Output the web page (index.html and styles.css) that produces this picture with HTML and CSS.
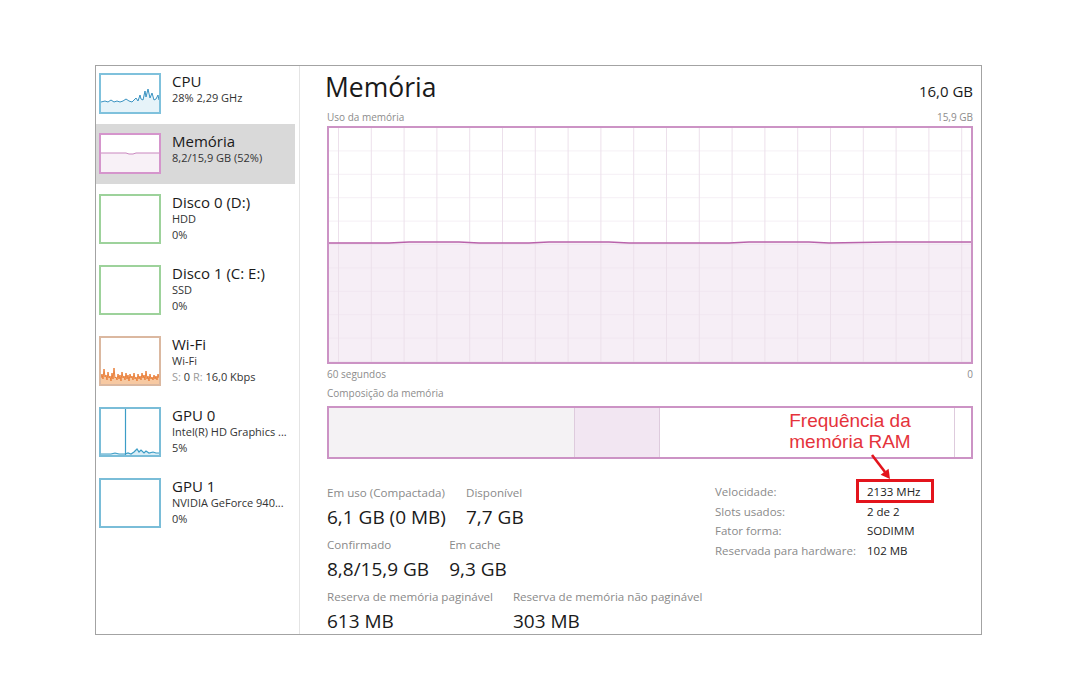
FILE: index.html
```html
<!DOCTYPE html>
<html lang="pt-BR">
<head>
<meta charset="utf-8">
<title>Memória</title>
<link rel="stylesheet" href="styles.css">
</head>
<body>
<div class="page">
  <div class="frame">
    <aside class="sidebar">
      <div class="item item-first">
        <div class="thumb thumb-cpu">
          <svg viewBox="0 0 58 37" preserveAspectRatio="none">
            <polygon class="fill-cpu" points="0,27 4,26 7,27 10,25 13,27 16,26 19,27 22,26 25,24 28,26 31,27 33,25 35,23 37,26 39,20 40,24 42,25 44,16 45,22 47,14 49,23 51,18 53,25 55,24 57,20 58,25 58,37 0,37"/>
            <polyline class="line-cpu" points="0,27 4,26 7,27 10,25 13,27 16,26 19,27 22,26 25,24 28,26 31,27 33,25 35,23 37,26 39,20 40,24 42,25 44,16 45,22 47,14 49,23 51,18 53,25 55,24 57,20 58,25"/>
          </svg>
        </div>
        <div class="info">
          <div class="name">CPU</div>
          <div class="sub">28% 2,29 GHz</div>
        </div>
      </div>
      <div class="item item-active">
        <div class="thumb thumb-mem">
          <svg viewBox="0 0 58 37" preserveAspectRatio="none">
            <polygon class="fill-mem" points="0,18 25,18 28,19 32,19 35,18 58,18 58,37 0,37"/>
            <polyline class="line-mem" points="0,18 25,18 28,19 32,19 35,18 58,18"/>
          </svg>
        </div>
        <div class="info">
          <div class="name">Memória</div>
          <div class="sub">8,2/15,9 GB (52%)</div>
        </div>
      </div>
      <div class="item item-tall">
        <div class="thumb thumb-tall thumb-disk"></div>
        <div class="info">
          <div class="name">Disco 0 (D:)</div>
          <div class="sub">HDD</div>
          <div class="sub">0%</div>
        </div>
      </div>
      <div class="item item-tall">
        <div class="thumb thumb-tall thumb-disk"></div>
        <div class="info">
          <div class="name">Disco 1 (C: E:)</div>
          <div class="sub">SSD</div>
          <div class="sub">0%</div>
        </div>
      </div>
      <div class="item item-tall">
        <div class="thumb thumb-tall thumb-wifi">
          <svg viewBox="0 0 58 46" preserveAspectRatio="none">
            <polygon class="fill-wifi" points="0,40 1,36 2,41 3,31 4,39 5,37 6,42 7,34 8,40 9,38 10,43 11,35 12,41 13,30 14,40 15,39 16,42 17,36 18,41 19,37 20,43 21,34 22,40 23,38 24,42 25,35 26,41 27,37 28,43 29,36 30,40 31,38 32,42 33,35 34,41 35,39 36,43 37,36 38,41 39,38 40,42 41,35 42,40 43,37 44,42 45,33 46,41 47,38 48,43 49,36 50,41 51,39 52,42 53,37 54,41 55,38 56,42 57,36 58,40 58,46 0,46"/>
            <polyline class="line-wifi" points="0,40 1,36 2,41 3,31 4,39 5,37 6,42 7,34 8,40 9,38 10,43 11,35 12,41 13,30 14,40 15,39 16,42 17,36 18,41 19,37 20,43 21,34 22,40 23,38 24,42 25,35 26,41 27,37 28,43 29,36 30,40 31,38 32,42 33,35 34,41 35,39 36,43 37,36 38,41 39,38 40,42 41,35 42,40 43,37 44,42 45,33 46,41 47,38 48,43 49,36 50,41 51,39 52,42 53,37 54,41 55,38 56,42 57,36 58,40"/>
          </svg>
        </div>
        <div class="info">
          <div class="name">Wi-Fi</div>
          <div class="sub">Wi-Fi</div>
          <div class="sub"><span class="dim">S:</span> 0 <span class="dim">R:</span> 16,0 Kbps</div>
        </div>
      </div>
      <div class="item item-tall">
        <div class="thumb thumb-tall thumb-gpu">
          <svg viewBox="0 0 58 46" preserveAspectRatio="none">
            <polygon class="fill-gpu" points="0,45 10,45 14,44 18,45 24,45 27,44 30,45 33,43 36,40 38,43 40,41 43,44 45,42 48,44 52,43 55,44 58,44 58,46 0,46"/>
            <polyline class="line-gpu" points="0,45 10,45 14,44 18,45 24,45 27,44 30,45 33,43 36,40 38,43 40,41 43,44 45,42 48,44 52,43 55,44 58,44"/>
            <line class="line-gpu" x1="24.5" y1="0" x2="24.5" y2="46"/>
          </svg>
        </div>
        <div class="info">
          <div class="name">GPU 0</div>
          <div class="sub">Intel(R) HD Graphics ...</div>
          <div class="sub">5%</div>
        </div>
      </div>
      <div class="item item-tall">
        <div class="thumb thumb-tall thumb-gpu"></div>
        <div class="info">
          <div class="name">GPU 1</div>
          <div class="sub">NVIDIA GeForce 940...</div>
          <div class="sub">0%</div>
        </div>
      </div>
    </aside>

    <main class="main">
      <div class="head">
        <h1 class="title">Memória</h1>
        <span class="total">16,0 GB</span>
      </div>
      <div class="axis axis-top"><span>Uso da memória</span><span>15,9 GB</span></div>
      <div class="graph">
        <svg viewBox="0 0 642 234" preserveAspectRatio="none">
          <defs>
            <pattern id="grid" x="9" y="0" width="32.8" height="23.4" patternUnits="userSpaceOnUse">
              <path d="M0.5 0 V23.4 M0 23.4 H32.8" class="grid-line"/>
            </pattern>
          </defs>
          <polygon class="graph-fill" points="0,115 60,115 80,114 130,114 150,115 200,115 220,114 280,114 300,115 400,115 420,114 480,114 500,115 560,114 642,114 642,234 0,234"/>
          <rect x="0" y="0" width="642" height="234" fill="url(#grid)"/>
          <polyline class="graph-line" points="0,115 60,115 80,114 130,114 150,115 200,115 220,114 280,114 300,115 400,115 420,114 480,114 500,115 560,114 642,114"/>
        </svg>
      </div>
      <div class="axis axis-below"><span>60 segundos</span><span>0</span></div>
      <div class="caption">Composição da memória</div>
      <div class="comp">
        <div class="seg seg-used"></div>
        <div class="seg seg-modified"></div>
        <div class="seg seg-standby"></div>
        <div class="seg seg-free"></div>
      </div>

      <div class="stats">
        <div class="stats-left">
          <div class="row">
            <div class="stat"><div class="label">Em uso (Compactada)</div><div class="value">6,1 GB (0 MB)</div></div>
            <div class="stat"><div class="label">Disponível</div><div class="value">7,7 GB</div></div>
          </div>
          <div class="row row-next">
            <div class="stat"><div class="label">Confirmado</div><div class="value">8,8/15,9 GB</div></div>
            <div class="stat"><div class="label">Em cache</div><div class="value">9,3 GB</div></div>
          </div>
          <div class="row row-next">
            <div class="stat"><div class="label">Reserva de memória paginável</div><div class="value">613 MB</div></div>
            <div class="stat"><div class="label">Reserva de memória não paginável</div><div class="value">303 MB</div></div>
          </div>
        </div>
        <div class="stats-right">
          <span class="k">Velocidade:</span><span class="v">2133 MHz</span>
          <span class="k">Slots usados:</span><span class="v">2 de 2</span>
          <span class="k">Fator forma:</span><span class="v">SODIMM</span>
          <span class="k">Reservada para hardware:</span><span class="v">102 MB</span>
        </div>
      </div>

      <div class="note">Frequência da<br>memória RAM</div>
      <svg class="arrow" viewBox="0 0 30 32" width="30" height="32">
        <line x1="7" y1="5" x2="20" y2="22" class="arrow-line"/>
        <polygon points="25,29 23.6,18.8 15.6,24.8" class="arrow-head"/>
      </svg>
      <div class="highlight"></div>
    </main>
  </div>
</div>
</body>
</html>
```

FILE: styles.css
```css
body {
  margin: 0;
  background: #ffffff;
  font-family: "Open Sans", "Noto Sans", sans-serif;
  color: #1b1b1b;
}

.page {
  padding: 65px 0 0 95px;
}

.frame {
  width: 887px;
  height: 570px;
  box-sizing: border-box;
  border: 1px solid #a3a3a3;
  display: flex;
  overflow: hidden;
}

/* ---------- sidebar ---------- */
.sidebar {
  width: 204px;
  flex: none;
  box-sizing: border-box;
  padding-right: 4px;
  border-right: 1px solid #e4e4e4;
}

.item {
  display: flex;
  align-items: flex-start;
  gap: 11px;
  padding: 9px 0 10px 3px;
}

.item-first {
  padding-top: 7px;
}

.item-tall {
  padding: 10px 0 11px 3px;
}

.item-active {
  background: #d9d9d9;
}

.thumb {
  width: 62px;
  height: 41px;
  flex: none;
  box-sizing: border-box;
  border: 2px solid #78bdd9;
  background: #ffffff;
}

.thumb svg {
  display: block;
  width: 100%;
  height: 100%;
}

.thumb-tall {
  height: 50px;
}

.thumb-cpu { border-color: #7fc1dc; }
.thumb-mem { border-color: #d595cc; }
.thumb-disk { border-color: #9dd29b; }
.thumb-wifi { border-color: #dbb8a0; }
.thumb-gpu { border-color: #7abdd8; }

.fill-cpu { fill: #e6f3f9; }
.line-cpu { fill: none; stroke: #3a93c2; stroke-width: 1; }
.fill-mem { fill: #f8f1f7; }
.line-mem { fill: none; stroke: #c987bf; stroke-width: 1; }
.fill-wifi { fill: #f7c9a2; }
.line-wifi { fill: none; stroke: #e8772e; stroke-width: 0.9; }
.fill-gpu { fill: #d9edf6; }
.line-gpu { fill: none; stroke: #3c9dc6; stroke-width: 1.2; }

.info {
  margin-top: -1px;
  white-space: nowrap;
}

.name {
  font-size: 15px;
  line-height: 18px;
  color: #1a1a1a;
}

.sub {
  font-size: 11px;
  line-height: 16px;
  color: #333333;
}

.dim {
  color: #9a9a9a;
}

/* ---------- main panel ---------- */
.main {
  flex: 1;
  min-width: 0;
  position: relative;
  padding: 5px 8px 0 27px;
}

.head {
  display: flex;
  justify-content: space-between;
  align-items: baseline;
  height: 32px;
}

.title {
  margin: 0;
  font-size: 26.5px;
  font-weight: 400;
  line-height: 32px;
  color: #1a1a1a;
  margin-left: -2px;
}

.total {
  font-size: 15px;
  color: #1a1a1a;
}

.axis {
  display: flex;
  justify-content: space-between;
  font-size: 10px;
  line-height: 14px;
  color: #8c8c8c;
}

.axis-top {
  margin-top: 7px;
}

.axis-below {
  margin-top: 3px;
}

.graph {
  margin-top: 2px;
  height: 238px;
  box-sizing: border-box;
  border: 2px solid #cc93c5;
}

.graph svg {
  display: block;
  width: 100%;
  height: 100%;
}

.grid-line {
  fill: none;
  stroke: #ece0eb;
  stroke-width: 1;
}

.graph-fill {
  fill: #f6eef6;
}

.graph-line {
  fill: none;
  stroke: #b963ab;
  stroke-width: 1.4;
}

.caption {
  margin-top: 5px;
  font-size: 10px;
  line-height: 14px;
  color: #8c8c8c;
}

.comp {
  margin-top: 6px;
  height: 53px;
  box-sizing: border-box;
  border: 2px solid #cc93c5;
  display: flex;
}

.seg {
  height: 100%;
  box-sizing: border-box;
  border-right: 1px solid #decbdd;
}

.seg-used { width: 246px; background: #f4f2f4; }
.seg-modified { width: 85px; background: #f2e6f2; }
.seg-standby { width: 295px; background: #ffffff; }
.seg-free { flex: 1; background: #ffffff; border-right: none; }

/* ---------- stats ---------- */
.stats {
  margin-top: 26px;
  display: flex;
  align-items: flex-start;
}

.stats-left {
  width: 388px;
  flex: none;
}

.row {
  display: flex;
  gap: 20px;
}

.row-next {
  margin-top: 8px;
}

.label {
  font-size: 11.6px;
  line-height: 15px;
  color: #8a8a8a;
  white-space: nowrap;
}

.value {
  margin-top: 5px;
  font-size: 19px;
  line-height: 24px;
  color: #1a1a1a;
  white-space: nowrap;
}

.stats-right {
  margin-top: -3px;
  display: grid;
  grid-template-columns: 152px auto;
  align-content: start;
  font-size: 11.5px;
  line-height: 19.5px;
}

.k {
  color: #8a8a8a;
  white-space: nowrap;
}

.v {
  color: #222222;
  white-space: nowrap;
}

/* ---------- annotation overlay ---------- */
.note {
  position: absolute;
  left: 470px;
  top: 344px;
  width: 160px;
  text-align: center;
  font-family: "Liberation Sans", Arial, sans-serif;
  font-size: 19px;
  line-height: 21px;
  color: #e5333b;
}

.arrow {
  position: absolute;
  left: 565px;
  top: 384px;
}

.arrow-line {
  stroke: #e3141c;
  stroke-width: 2.6;
}

.arrow-head {
  fill: #e3141c;
}

.highlight {
  position: absolute;
  left: 556px;
  top: 413px;
  width: 78px;
  height: 24px;
  box-sizing: border-box;
  border: 3px solid #e3141c;
}
```
